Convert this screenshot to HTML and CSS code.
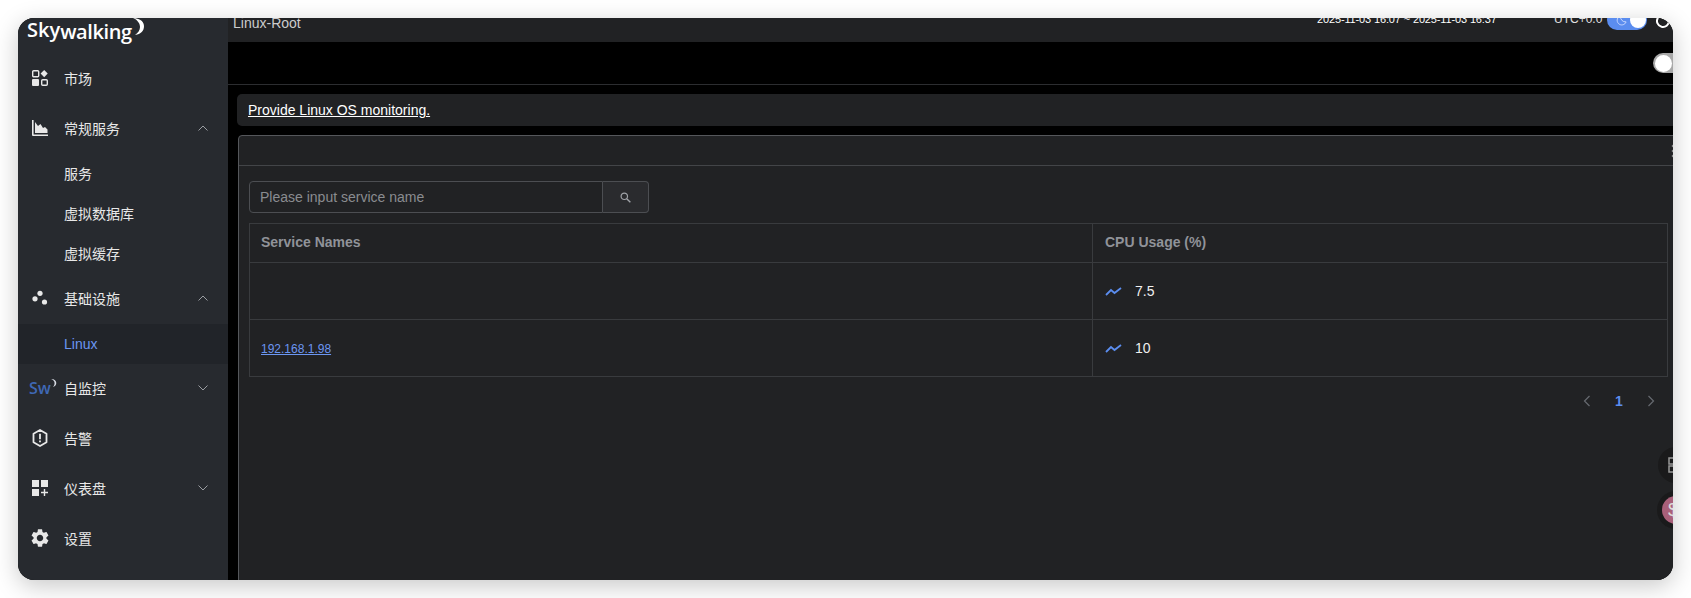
FILE: index.html
```html
<!DOCTYPE html>
<html lang="en">
<head>
  <meta charset="UTF-8" />
  <title>Linux-Root</title>
  <link rel="stylesheet" href="styles.css">
</head>
<body>
  <div class="window">
    <!-- Sidebar -->
    <aside class="sidebar">
      <div class="logo">
        <span class="logo-text">Sky<span class="logo-rest">walking</span></span>
        <svg class="logo-moon" width="14" height="18" viewBox="0 0 14 18"><path d="M2 0c4 0 11 2 11 8 0 5-3 8-9 9 3-2 5-5 5-8S7 2 2 0z" fill="#fff"/></svg>
      </div>
      <nav>
        <a class="nav-item">
          <svg class="nav-icon" viewBox="0 0 16 16"><rect x="0.7" y="0.7" width="6" height="6" rx="1" fill="none" stroke="#e8e8e8" stroke-width="1.4"/><path d="M12.2 0l3.5 3.6-3.5 3.6-3.6-3.6z" fill="#e8e8e8"/><rect y="9" width="7" height="7" rx="1" fill="#e8e8e8"/><rect x="9.7" y="9.7" width="5.6" height="5.6" rx="1" fill="none" stroke="#e8e8e8" stroke-width="1.4"/></svg>
          <span>市场</span>
        </a>
        <a class="nav-item">
          <svg class="nav-icon" viewBox="0 0 16 16"><path d="M0 0h1.6v14.400H16V16H1a1 1 0 0 1-1-1z" fill="#e8e8e8"/><path d="M3 13V2l3 4 2.500-2 2.500 4 2-1 2.500 2.500V13z" fill="#e8e8e8"/></svg>
          <span>常规服务</span>
          <svg class="chevron" viewBox="0 0 10 6"><path d="M.5 5.500L5 1l4.500 4.500" fill="none" stroke="#9a9da2"/></svg>
        </a>
        <a class="nav-item sub">服务</a>
        <a class="nav-item sub">虚拟数据库</a>
        <a class="nav-item sub">虚拟缓存</a>
        <a class="nav-item">
          <svg class="nav-icon" viewBox="0 0 16 16"><circle cx="8" cy="3.300" r="2.600" fill="#e8e8e8"/><circle cx="3" cy="8.800" r="2.600" fill="#e8e8e8"/><circle cx="12.500" cy="12" r="2.600" fill="#e8e8e8"/></svg>
          <span>基础设施</span>
          <svg class="chevron" viewBox="0 0 10 6"><path d="M.5 5.500L5 1l4.500 4.500" fill="none" stroke="#9a9da2"/></svg>
        </a>
        <a class="nav-item sub active">Linux</a>
        <a class="nav-item">
          <span class="sw-logo">Sw<svg width="6" height="8" viewBox="0 0 5 7"><path d="M0 0c3 0 4.500 1.500 4.500 3.500S3 6.500 1.500 7c1-1 1.500-2 1.500-3.500S2 1 0 0z" fill="#d8dce4"/></svg></span>
          <span>自监控</span>
          <svg class="chevron" viewBox="0 0 10 6"><path d="M.5.500L5 5l4.500-4.500" fill="none" stroke="#9a9da2"/></svg>
        </a>
        <a class="nav-item">
          <svg class="nav-icon tall" viewBox="0 0 16 18"><path d="M8 1l6.500 3.700v8.600L8 17l-6.500-3.700V4.700z" fill="none" stroke="#e8e8e8" stroke-width="1.800" stroke-linejoin="round"/><path d="M7.100 4.800h1.800v5.400H7.100zM7.100 11.400h1.800v1.800H7.100z" fill="#e8e8e8"/></svg>
          <span>告警</span>
        </a>
        <a class="nav-item">
          <svg class="nav-icon" viewBox="0 0 16 16"><rect width="7" height="7" fill="#e8e8e8"/><rect x="9" width="7" height="7" fill="#e8e8e8"/><rect y="9" width="7" height="7" fill="#e8e8e8"/><path d="M11.800 9h1.400v2.800H16v1.400h-2.800V16h-1.400v-2.800H9v-1.400h2.800z" fill="#e8e8e8"/></svg>
          <span>仪表盘</span>
          <svg class="chevron" viewBox="0 0 10 6"><path d="M.5.500L5 5l4.500-4.500" fill="none" stroke="#9a9da2"/></svg>
        </a>
        <a class="nav-item">
          <svg class="nav-icon gear" viewBox="2 2 20 20"><path d="M19.140 12.940c.04-.3.06-.61.06-.94 0-.32-.02-.64-.07-.94l2.030-1.580c.18-.14.23-.41.12-.61l-1.920-3.320c-.12-.22-.37-.29-.59-.22l-2.390.96c-.5-.38-1.030-.7-1.620-.94l-.36-2.540c-.04-.24-.24-.41-.48-.41h-3.840c-.24 0-.43.17-.47.41l-.36 2.540c-.59.24-1.130.57-1.620.94l-2.390-.96c-.22-.08-.47 0-.59.22L2.740 8.870c-.12.21-.08.47.12.61l2.030 1.580c-.05.3-.09.63-.09.94s.02.64.07.94l-2.030 1.580c-.18.14-.23.41-.12.61l1.920 3.320c.12.22.37.29.59.22l2.390-.96c.5.38 1.030.7 1.620.94l.36 2.540c.05.24.24.41.48.41h3.840c.24 0 .44-.17.47-.41l.36-2.540c.59-.24 1.130-.56 1.620-.94l2.390.96c.22.08.47 0 .59-.22l1.920-3.320c.12-.22.07-.47-.12-.61l-2.010-1.580zM12 15.600c-1.980 0-3.600-1.620-3.600-3.600s1.620-3.600 3.600-3.600 3.600 1.620 3.600 3.600-1.620 3.600-3.600 3.600z" fill="#e8e8e8"/></svg>
          <span>设置</span>
        </a>
      </nav>
    </aside>

    <main class="main">
      <!-- Top bar, its text is cut by the window edge -->
      <header class="topbar">
        <span class="crumb">Linux-Root</span>
        <span class="time-range">2025-11-03 16:07 ~ 2025-11-03 16:37</span>
        <span class="timezone">UTC+0.0</span>
        <span class="theme-switch">
          <svg width="11" height="11" viewBox="0 0 12 12"><path d="M5 1a5 5 0 1 0 6 6.500A5.500 5.500 0 0 1 5 1z" fill="none" stroke="#cfdcff"/></svg>
          <i class="knob"></i>
        </span>
        <svg class="reload" width="18" height="18" viewBox="0 0 18 18"><path d="M15 9a6 6 0 1 1-2-4.500" fill="none" stroke="#fff" stroke-width="2"/></svg>
      </header>

      <div class="toolbar">
        <span class="edit-switch"><i class="edit-knob"></i></span>
      </div>

      <div class="description"><a>Provide Linux OS monitoring.</a></div>

      <section class="panel">
        <div class="panel-head">
          <svg class="panel-dots" width="4" height="14" viewBox="0 0 4 14"><circle cx="2" cy="2" r="1.300" fill="#888"/><circle cx="2" cy="7" r="1.300" fill="#888"/><circle cx="2" cy="12" r="1.300" fill="#888"/></svg>
        </div>
        <div class="panel-body">
          <div class="search">
            <input class="search-input" type="text" placeholder="Please input service name">
            <button class="search-btn" type="button">
              <svg width="11" height="11" viewBox="0 0 12 12"><circle cx="4.700" cy="4.700" r="3.500" fill="none" stroke="#a0a3a8" stroke-width="1.300"/><path d="M7.300 7.300l4 4" stroke="#a0a3a8" stroke-width="1.500"/></svg>
            </button>
          </div>

          <table class="services">
            <tr>
              <th class="col-name">Service Names</th>
              <th>CPU Usage (%)</th>
            </tr>
            <tr>
              <td></td>
              <td>
                <div class="metric">
                  <svg width="17" height="9" viewBox="0 0 17 9"><path d="M1 8l5-5 3.500 3L16 1" fill="none" stroke="#5b8def" stroke-width="1.800"/></svg>
                  <span>7.5</span>
                </div>
              </td>
            </tr>
            <tr>
              <td><a class="service-link">192.168.1.98</a></td>
              <td>
                <div class="metric">
                  <svg width="17" height="9" viewBox="0 0 17 9"><path d="M1 8l5-5 3.500 3L16 1" fill="none" stroke="#5b8def" stroke-width="1.800"/></svg>
                  <span>10</span>
                </div>
              </td>
            </tr>
          </table>

          <div class="pager">
            <svg width="8" height="12" viewBox="0 0 8 12"><path d="M6.500 1L1.500 6l5 5" fill="none" stroke="#666a70" stroke-width="1.200"/></svg>
            <span class="page-num">1</span>
            <svg width="8" height="12" viewBox="0 0 8 12"><path d="M1.500 1l5 5-5 5" fill="none" stroke="#666a70" stroke-width="1.200"/></svg>
          </div>
        </div>
      </section>

      <!-- Floating buttons over the right edge -->
      <div class="float-btn float-grid">
        <svg width="14" height="16" viewBox="0 0 14 16"><rect x="1" y="1" width="12" height="6" fill="none" stroke="#999" stroke-width="1.500"/><rect x="1" y="9" width="12" height="6" fill="none" stroke="#999" stroke-width="1.500"/></svg>
      </div>
      <div class="float-btn float-pay"><span class="pay-disc">$</span></div>
    </main>
  </div>
</body>
</html>
```

FILE: styles.css
```css
* {
  box-sizing: border-box;
}

body {
  margin: 0;
  padding: 18px;
  height: 598px;
  background-color: #fff;
  font-family: "Liberation Sans", "Noto Sans CJK SC", sans-serif;
  font-size: 14px;
  overflow: hidden;
}

.window {
  display: flex;
  width: 1655px;
  height: 562px;
  border-radius: 16px;
  overflow: hidden;
  background-color: #000;
  box-shadow: 0 6px 24px rgba(0, 0, 0, 0.22);
}

/* Sidebar */
.sidebar {
  flex: 0 0 210px;
  background-color: #272a2f;
  color: #e8e8e8;
}

.logo {
  display: flex;
  height: 36px;
  padding-left: 9px;
  overflow: hidden;
}

.logo-text {
  margin-top: -2px;
  font-family: "Open Sans", sans-serif;
  font-size: 20px;
  font-weight: 600;
  line-height: 28px;
  color: #fff;
}

.logo-rest {
  vertical-align: -2px;
  letter-spacing: -0.4px;
}

.logo-moon {
  margin-left: -1px;
}

.nav-item {
  display: flex;
  align-items: center;
  height: 50px;
  padding: 0 20px 2px 14px;
}

.nav-icon {
  flex: 0 0 16px;
  width: 16px;
  height: 16px;
  margin-right: 16px;
}

.tall {
  height: 18px;
}

.gear {
  flex-basis: 18px;
  width: 18px;
  height: 18px;
  margin-left: -1px;
  margin-right: 15px;
}

.sw-logo {
  display: flex;
  flex: 0 0 32px;
  margin-left: -3px;
  margin-right: 3px;
  font-family: "Open Sans", sans-serif;
  font-size: 16px;
  font-weight: 600;
  line-height: 20px;
  color: #3f68b5;
}

.sw-logo svg {
  margin-top: 1px;
}

.chevron {
  width: 10px;
  height: 6px;
  margin-left: auto;
}

.sub {
  height: 40px;
  padding-left: 46px;
}

.active {
  padding-bottom: 0;
  background-color: #212429;
  color: #6b96f2;
}

/* Main column */
.main {
  position: relative;
  flex: 1;
  min-width: 0;
  overflow: hidden;
}

.topbar {
  display: flex;
  height: 24px;
  padding-left: 5px;
  background-color: #212224;
  color: #ddd;
  overflow: hidden;
}

.crumb {
  width: 1084px;
  font-size: 14px;
  line-height: 16px;
  margin-top: -3px;
  color: #ccc;
}

.time-range {
  width: 237px;
  margin-top: -6px;
  font-size: 11px;
  line-height: 14px;
  letter-spacing: -0.14px;
  white-space: nowrap;
  color: #fff;
}

.timezone {
  width: 53px;
  margin-top: -6px;
  font-size: 12px;
  line-height: 14px;
  color: #e0e0e0;
}

.theme-switch {
  display: flex;
  align-items: center;
  justify-content: space-between;
  width: 40px;
  height: 20px;
  margin-top: -8px;
  padding: 0 1px 0 9px;
  border-radius: 10px;
  background-color: #5b8def;
}

.knob {
  width: 16px;
  height: 16px;
  border-radius: 50%;
  background-color: #fff;
}

.reload {
  margin-top: -6px;
  margin-left: 7px;
  flex: none;
}

.toolbar {
  display: flex;
  justify-content: flex-end;
  align-items: center;
  height: 43px;
  border-bottom: 1px solid #2c2d30;
}

.edit-switch {
  display: flex;
  align-items: center;
  width: 20px;
  height: 20px;
  border-radius: 10px 0 0 10px;
  background-color: #a8a8a8;
  padding-left: 2px;
}

.edit-knob {
  width: 17px;
  height: 17px;
  border-radius: 50%;
  background-color: #fff;
}

.description {
  height: 32px;
  margin: 9px 0 0 9px;
  padding-left: 11px;
  border-radius: 5px 0 0 5px;
  background-color: #212224;
  line-height: 32px;
  color: #fff;
}

.description a {
  text-decoration: underline;
}

.panel {
  display: flex;
  flex-direction: column;
  width: 1445px;
  height: 454px;
  margin: 9px 0 0 10px;
  border: 1px solid #55575b;
  border-radius: 4px;
  background-color: #212224;
}

.panel-head {
  display: flex;
  flex: 0 0 30px;
  align-items: center;
  justify-content: flex-end;
  padding-right: 7px;
  border-bottom: 1px solid #434548;
}

.panel-body {
  padding: 15px 10px 0;
}

.search {
  display: flex;
  width: 400px;
  height: 32px;
}

.search-input {
  width: 354px;
  padding: 0 10px;
  border: 1px solid #4c4e52;
  border-radius: 4px 0 0 4px;
  background-color: transparent;
  font: 14px "Liberation Sans", sans-serif;
  color: #ddd;
}

.search-input::placeholder {
  color: #8a8c90;
  opacity: 1;
}

.search-btn {
  display: flex;
  align-items: center;
  justify-content: center;
  width: 46px;
  border: 1px solid #4c4e52;
  border-left: 0;
  border-radius: 0 4px 4px 0;
  background-color: #2a2b2e;
}

.services {
  width: 1419px;
  margin-top: 10px;
  border-collapse: collapse;
  table-layout: fixed;
}

.services th,
.services td {
  height: 57px;
  padding: 0 12px 0 11px;
  border: 1px solid #393b3e;
  text-align: left;
}

.services th {
  height: 39px;
  padding-bottom: 2px;
  font-size: 14px;
  color: #909399;
}

.services td + td,
.services th + th {
  padding-left: 12px;
}

.col-name {
  width: 843px;
}

.metric {
  display: flex;
  align-items: center;
  gap: 13px;
  color: #f0f0f0;
}

.service-link {
  font-size: 12px;
  color: #6b96f2;
  text-decoration: underline;
}

.pager {
  display: flex;
  align-items: center;
  justify-content: flex-end;
  gap: 24px;
  height: 48px;
  width: 1419px;
  padding-right: 13px;
}

.page-num {
  width: 8px;
  font-weight: bold;
  font-size: 14px;
  color: #5b8def;
}

/* Floating buttons */
.float-btn {
  position: absolute;
  left: 1430px;
  display: flex;
  align-items: center;
  width: 36px;
  height: 36px;
  padding-left: 10px;
  border-radius: 50%;
  background-color: #1a1a1b;
}

.float-grid {
  top: 429px;
}

.float-pay {
  top: 473px;
  width: 38px;
  height: 38px;
  left: 1429px;
  padding-left: 5px;
}

.pay-disc {
  flex: none;
  width: 28px;
  height: 28px;
  padding-left: 6px;
  border-radius: 50%;
  background-color: #a9607a;
  line-height: 28px;
  font-size: 19px;
  color: #ddd;
}
```
